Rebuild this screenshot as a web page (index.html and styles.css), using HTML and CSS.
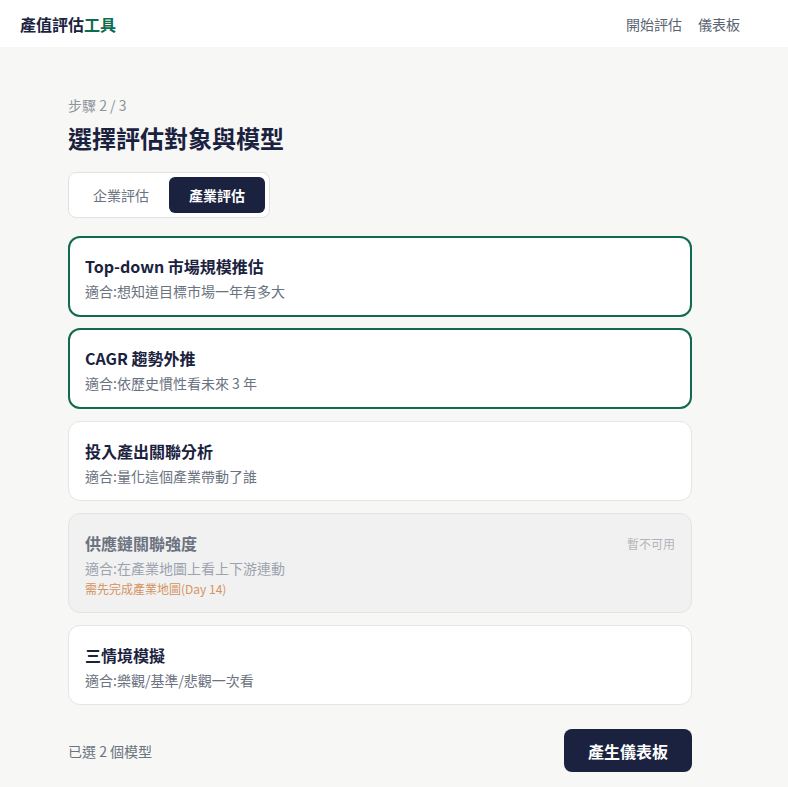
FILE: index.html
```html
<!DOCTYPE html>
<html lang="zh-Hant">
<head>
<meta charset="utf-8">
<title>產值評估工具</title>
<link rel="stylesheet" href="styles.css">
</head>
<body>
<header class="topbar">
  <div class="topbar-inner">
    <div class="logo">產值評估<span class="logo-accent">工具</span></div>
    <nav class="nav">
      <a class="nav-link">開始評估</a>
      <a class="nav-link">儀表板</a>
    </nav>
  </div>
</header>
<main class="main">
  <div class="step">步驟 2 / 3</div>
  <h1 class="title">選擇評估對象與模型</h1>
  <div class="tabs">
    <div class="tab">企業評估</div>
    <div class="tab tab-active">產業評估</div>
  </div>
  <div class="cards">
    <div class="card card-selected">
      <div class="card-title">Top-down 市場規模推估</div>
      <div class="card-sub">適合:想知道目標市場一年有多大</div>
    </div>
    <div class="card card-selected">
      <div class="card-title">CAGR 趨勢外推</div>
      <div class="card-sub">適合:依歷史慣性看未來 3 年</div>
    </div>
    <div class="card">
      <div class="card-title">投入產出關聯分析</div>
      <div class="card-sub">適合:量化這個產業帶動了誰</div>
    </div>
    <div class="card card-disabled">
      <div class="card-head">
        <div class="card-title">供應鏈關聯強度</div>
        <div class="badge">暫不可用</div>
      </div>
      <div class="card-sub">適合:在產業地圖上看上下游連動</div>
      <div class="card-note">需先完成產業地圖(Day 14)</div>
    </div>
    <div class="card">
      <div class="card-title">三情境模擬</div>
      <div class="card-sub">適合:樂觀/基準/悲觀一次看</div>
    </div>
  </div>
  <div class="footer">
    <div class="count">已選 2 個模型</div>
    <button class="primary">產生儀表板</button>
  </div>
</main>
</body>
</html>
```
FILE: styles.css
```css
* { box-sizing: border-box; }
html, body { margin: 0; padding: 0; }
body {
  background: #f7f7f5;
  font-family: "Noto Sans CJK TC", "Noto Sans", sans-serif;
  color: #1a2240;
}
.topbar {
  height: 47px;
  background: #ffffff;
}
.topbar-inner {
  width: 760px;
  height: 100%;
  display: flex;
  align-items: center;
  justify-content: space-between;
  padding: 0 20px;
}
.logo { font-size: 16px; font-weight: 700; color: #1a2240; }
.logo-accent { color: #0f6b50; }
.nav { display: flex; gap: 16px; }
.nav-link { font-size: 14px; color: #5b6472; }
.main { width: 760px; padding: 48px 68px 0 68px; }
.step { font-size: 14px; line-height: 20px; color: #8e949c; }
.title {
  margin: 6px 0 0 0;
  font-size: 24px;
  line-height: 34px;
  font-weight: 700;
  color: #1a2240;
}
.tabs {
  margin-top: 17px;
  display: inline-flex;
  padding: 4px;
  background: #ffffff;
  border: 1px solid #e2e2e4;
  border-radius: 8px;
}
.tab {
  width: 96px;
  height: 36px;
  display: flex;
  align-items: center;
  justify-content: center;
  font-size: 14px;
  color: #6b7280;
  border-radius: 6px;
}
.tab-active { background: #1a2240; color: #ffffff; font-weight: 700; }
.cards {
  margin-top: 18px;
  display: flex;
  flex-direction: column;
  gap: 12px;
}
.card {
  background: #ffffff;
  border: 1px solid #e5e5e7;
  border-radius: 12px;
  padding: 17px 16px 14px 16px;
}
.card-selected { border: 2px solid #11694f; padding: 16px 15px 14px 15px; }
.cards .card-selected + .card-selected { margin-top: -1px; }
.card-title { font-size: 16px; line-height: 24px; font-weight: 700; color: #1a2240; }
.card-sub { font-size: 14px; line-height: 20px; margin-top: 3px; color: #6b7280; }
.card-head { display: flex; justify-content: space-between; align-items: center; }
.card-disabled { background: #f1f1f1; border-color: #e3e3e3; }
.card-disabled .card-title { color: #6b7280; }
.card-disabled .card-sub { color: #9ca3af; }
.badge { font-size: 12px; color: #b1b5bb; }
.card-note { font-size: 12px; line-height: 18px; margin-top: 2px; color: #d6935e; }
.footer {
  margin-top: 24px;
  display: flex;
  justify-content: space-between;
  align-items: center;
}
.count { font-size: 14px; color: #6b7280; }
.primary {
  font-family: inherit;
  border: none;
  background: #1a2240;
  color: #ffffff;
  font-size: 16px;
  font-weight: 700;
  height: 43px;
  padding: 0 24px;
  border-radius: 8px;
}
```
